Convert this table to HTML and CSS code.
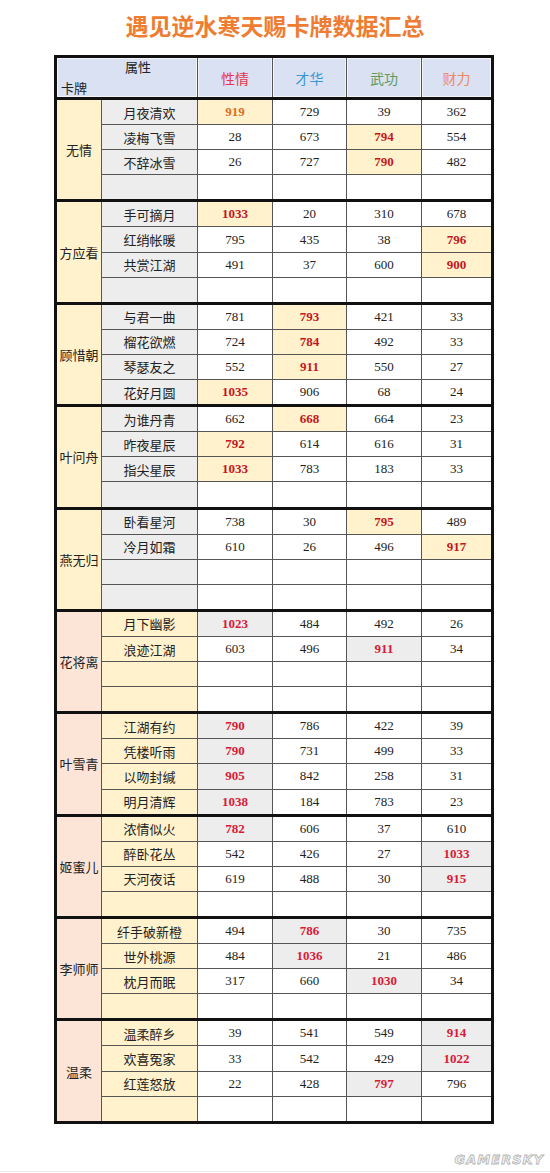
FILE: index.html
```html
<!DOCTYPE html>
<html lang="zh">
<head>
<meta charset="utf-8">
<title>遇见逆水寒天赐卡牌数据汇总</title>
<link rel="stylesheet" href="styles.css">
</head>
<body>
<h1 class="title">遇见逆水寒天赐卡牌数据汇总</h1>
<table class="cards">
  <colgroup>
    <col class="c-grp"><col class="c-nm"><col class="c-v1"><col class="c-v2"><col class="c-v3"><col class="c-v4">
  </colgroup>
  <thead>
    <tr class="head">
      <th colspan="2" class="diag"><div class="diag-in"><span class="d-attr">属性</span><span class="d-card">卡牌</span></div></th>
      <th class="h-xq">性情</th>
      <th class="h-ch">才华</th>
      <th class="h-wg">武功</th>
      <th class="h-cl">财力</th>
    </tr>
  </thead>
  <tbody>
    <tr class="gs"><td class="grp y" rowspan="4">无情</td><td class="nm g">月夜清欢</td><td class="hl y o">919</td><td>729</td><td>39</td><td>362</td></tr>
    <tr><td class="nm g">凌梅飞雪</td><td>28</td><td>673</td><td class="hl y">794</td><td>554</td></tr>
    <tr><td class="nm g">不辞冰雪</td><td>26</td><td>727</td><td class="hl y">790</td><td>482</td></tr>
    <tr><td class="nm g"></td><td></td><td></td><td></td><td></td></tr>

    <tr class="gs"><td class="grp y" rowspan="4">方应看</td><td class="nm g">手可摘月</td><td class="hl y">1033</td><td>20</td><td>310</td><td>678</td></tr>
    <tr><td class="nm g">红绡帐暖</td><td>795</td><td>435</td><td>38</td><td class="hl y">796</td></tr>
    <tr><td class="nm g">共赏江湖</td><td>491</td><td>37</td><td>600</td><td class="hl y">900</td></tr>
    <tr><td class="nm g"></td><td></td><td></td><td></td><td></td></tr>

    <tr class="gs"><td class="grp y" rowspan="4">顾惜朝</td><td class="nm g">与君一曲</td><td>781</td><td class="hl y">793</td><td>421</td><td>33</td></tr>
    <tr><td class="nm g">榴花欲燃</td><td>724</td><td class="hl y">784</td><td>492</td><td>33</td></tr>
    <tr><td class="nm g">琴瑟友之</td><td>552</td><td class="hl y">911</td><td>550</td><td>27</td></tr>
    <tr><td class="nm g">花好月圆</td><td class="hl y">1035</td><td>906</td><td>68</td><td>24</td></tr>

    <tr class="gs"><td class="grp y" rowspan="4">叶问舟</td><td class="nm g">为谁丹青</td><td>662</td><td class="hl y">668</td><td>664</td><td>23</td></tr>
    <tr><td class="nm g">昨夜星辰</td><td class="hl y">792</td><td>614</td><td>616</td><td>31</td></tr>
    <tr><td class="nm g">指尖星辰</td><td class="hl y">1033</td><td>783</td><td>183</td><td>33</td></tr>
    <tr><td class="nm g"></td><td></td><td></td><td></td><td></td></tr>

    <tr class="gs"><td class="grp y" rowspan="4">燕无归</td><td class="nm g">卧看星河</td><td>738</td><td>30</td><td class="hl y">795</td><td>489</td></tr>
    <tr><td class="nm g">冷月如霜</td><td>610</td><td>26</td><td>496</td><td class="hl y">917</td></tr>
    <tr><td class="nm g"></td><td></td><td></td><td></td><td></td></tr>
    <tr><td class="nm g"></td><td></td><td></td><td></td><td></td></tr>

    <tr class="gs"><td class="grp p" rowspan="4">花将离</td><td class="nm y">月下幽影</td><td class="hl g r">1023</td><td>484</td><td>492</td><td>26</td></tr>
    <tr><td class="nm y">浪迹江湖</td><td>603</td><td>496</td><td class="hl g r">911</td><td>34</td></tr>
    <tr><td class="nm y"></td><td></td><td></td><td></td><td></td></tr>
    <tr><td class="nm y"></td><td></td><td></td><td></td><td></td></tr>

    <tr class="gs"><td class="grp p" rowspan="4">叶雪青</td><td class="nm y">江湖有约</td><td class="hl g r">790</td><td>786</td><td>422</td><td>39</td></tr>
    <tr><td class="nm y">凭楼听雨</td><td class="hl g r">790</td><td>731</td><td>499</td><td>33</td></tr>
    <tr><td class="nm y">以吻封缄</td><td class="hl g r">905</td><td>842</td><td>258</td><td>31</td></tr>
    <tr><td class="nm y">明月清辉</td><td class="hl g r">1038</td><td>184</td><td>783</td><td>23</td></tr>

    <tr class="gs"><td class="grp p" rowspan="4">姬蜜儿</td><td class="nm y">浓情似火</td><td class="hl g r">782</td><td>606</td><td>37</td><td>610</td></tr>
    <tr><td class="nm y">醉卧花丛</td><td>542</td><td>426</td><td>27</td><td class="hl g r">1033</td></tr>
    <tr><td class="nm y">天河夜话</td><td>619</td><td>488</td><td>30</td><td class="hl g r">915</td></tr>
    <tr><td class="nm y"></td><td></td><td></td><td></td><td></td></tr>

    <tr class="gs"><td class="grp p" rowspan="4">李师师</td><td class="nm y">纤手破新橙</td><td>494</td><td class="hl g r">786</td><td>30</td><td>735</td></tr>
    <tr><td class="nm y">世外桃源</td><td>484</td><td class="hl g r">1036</td><td>21</td><td>486</td></tr>
    <tr><td class="nm y">枕月而眠</td><td>317</td><td>660</td><td class="hl g r">1030</td><td>34</td></tr>
    <tr><td class="nm y"></td><td></td><td></td><td></td><td></td></tr>

    <tr class="gs"><td class="grp p" rowspan="4">温柔</td><td class="nm y">温柔醉乡</td><td>39</td><td>541</td><td>549</td><td class="hl g r">914</td></tr>
    <tr><td class="nm y">欢喜冤家</td><td>33</td><td>542</td><td>429</td><td class="hl g r">1022</td></tr>
    <tr><td class="nm y">红莲怒放</td><td>22</td><td>428</td><td class="hl g r">797</td><td>796</td></tr>
    <tr><td class="nm y"></td><td></td><td></td><td></td><td></td></tr>
  </tbody>
</table>
<footer class="foot"><span class="mark">GAMERSKY</span></footer>
</body>
</html>
```

FILE: styles.css
```css
html, body {
  margin: 0;
  padding: 0;
  background: #ffffff;
}
body {
  width: 550px;
  font-family: "Noto Sans CJK SC", "Noto Sans", sans-serif;
  color: #222;
}
.title {
  margin: 0;
  padding-top: 11px;
  box-sizing: border-box;
  height: 55px;
  text-align: center;
  font-size: 23px;
  line-height: 28px;
  font-weight: 700;
  color: #ee7c31;
}
.cards {
  border-collapse: collapse;
  table-layout: fixed;
  margin-left: 54px;
  border: 3px solid #111;
}
.c-grp { width: 46px; }
.c-nm { width: 96px; }
.c-v1 { width: 75px; }
.c-v2 { width: 74px; }
.c-v3 { width: 75px; }
.c-v4 { width: 71px; }

.cards td, .cards th {
  border: 1px solid #555;
  padding: 0;
  text-align: center;
  vertical-align: middle;
}
.head th {
  height: 39px;
  background: #d9e1f2;
  font-weight: 400;
  font-size: 14px;
  border-bottom: 3px solid #111;
  box-shadow: inset 0 0 0 1px #f2f4fa;
}
.h-xq { color: #e5354d; }
.h-ch { color: #3a98d8; }
.h-wg { color: #5d9b5f; }
.h-cl { color: #ef8a5e; }
.diag {
  background-image: linear-gradient(to top right, transparent calc(50% - 0.8px), #222 50%, transparent calc(50% + 0.8px));
}
.diag-in {
  height: 39px;
  display: flex;
  flex-direction: column;
  justify-content: space-between;
  font-size: 13px;
  line-height: 16px;
  color: #222;
}
.d-attr {
  align-self: flex-end;
  margin-right: 46px;
  margin-top: 1px;
}
.d-card {
  align-self: flex-start;
  margin-left: 4px;
  margin-bottom: 1px;
}
.cards tbody tr {
  height: 25.1px;
}
.cards tbody td {
  height: 24.1px;
  font-family: "Liberation Serif", "Times New Roman", serif;
  font-size: 13px;
  color: #222;
  background: #ffffff;
}
.cards tr.gs td {
  border-top: 3px solid #111;
}
.cards tbody td.grp {
  font-family: "Noto Sans CJK SC", "Noto Sans", sans-serif;
  font-size: 13px;
}
.cards tbody td.nm {
  font-family: "Noto Sans CJK SC", "Noto Sans", sans-serif;
  font-size: 13px;
}
.cards tbody td.y { background: #fff2cc; }
.cards tbody td.g { background: #ededed; }
.cards tbody td.p { background: #fce4d6; }
.cards tbody td.hl {
  font-weight: 700;
  color: #c4161c;
}
.cards tbody td.hl.o { color: #df6c24; }
.cards tbody td.hl.r { color: #d91a36; }

.foot {
  height: 48px;
  box-sizing: border-box;
  border-bottom: 1px solid #ececec;
  display: flex;
  justify-content: flex-end;
  align-items: flex-start;
  padding-top: 28px;
  padding-right: 6px;
}
.mark {
  font-family: "DejaVu Sans", sans-serif;
  font-style: italic;
  font-weight: 700;
  font-size: 13px;
  letter-spacing: 1px;
  color: #f4f4f4;
  -webkit-text-stroke: 0.8px #b5b5b5;
  line-height: 16px;
}
```
